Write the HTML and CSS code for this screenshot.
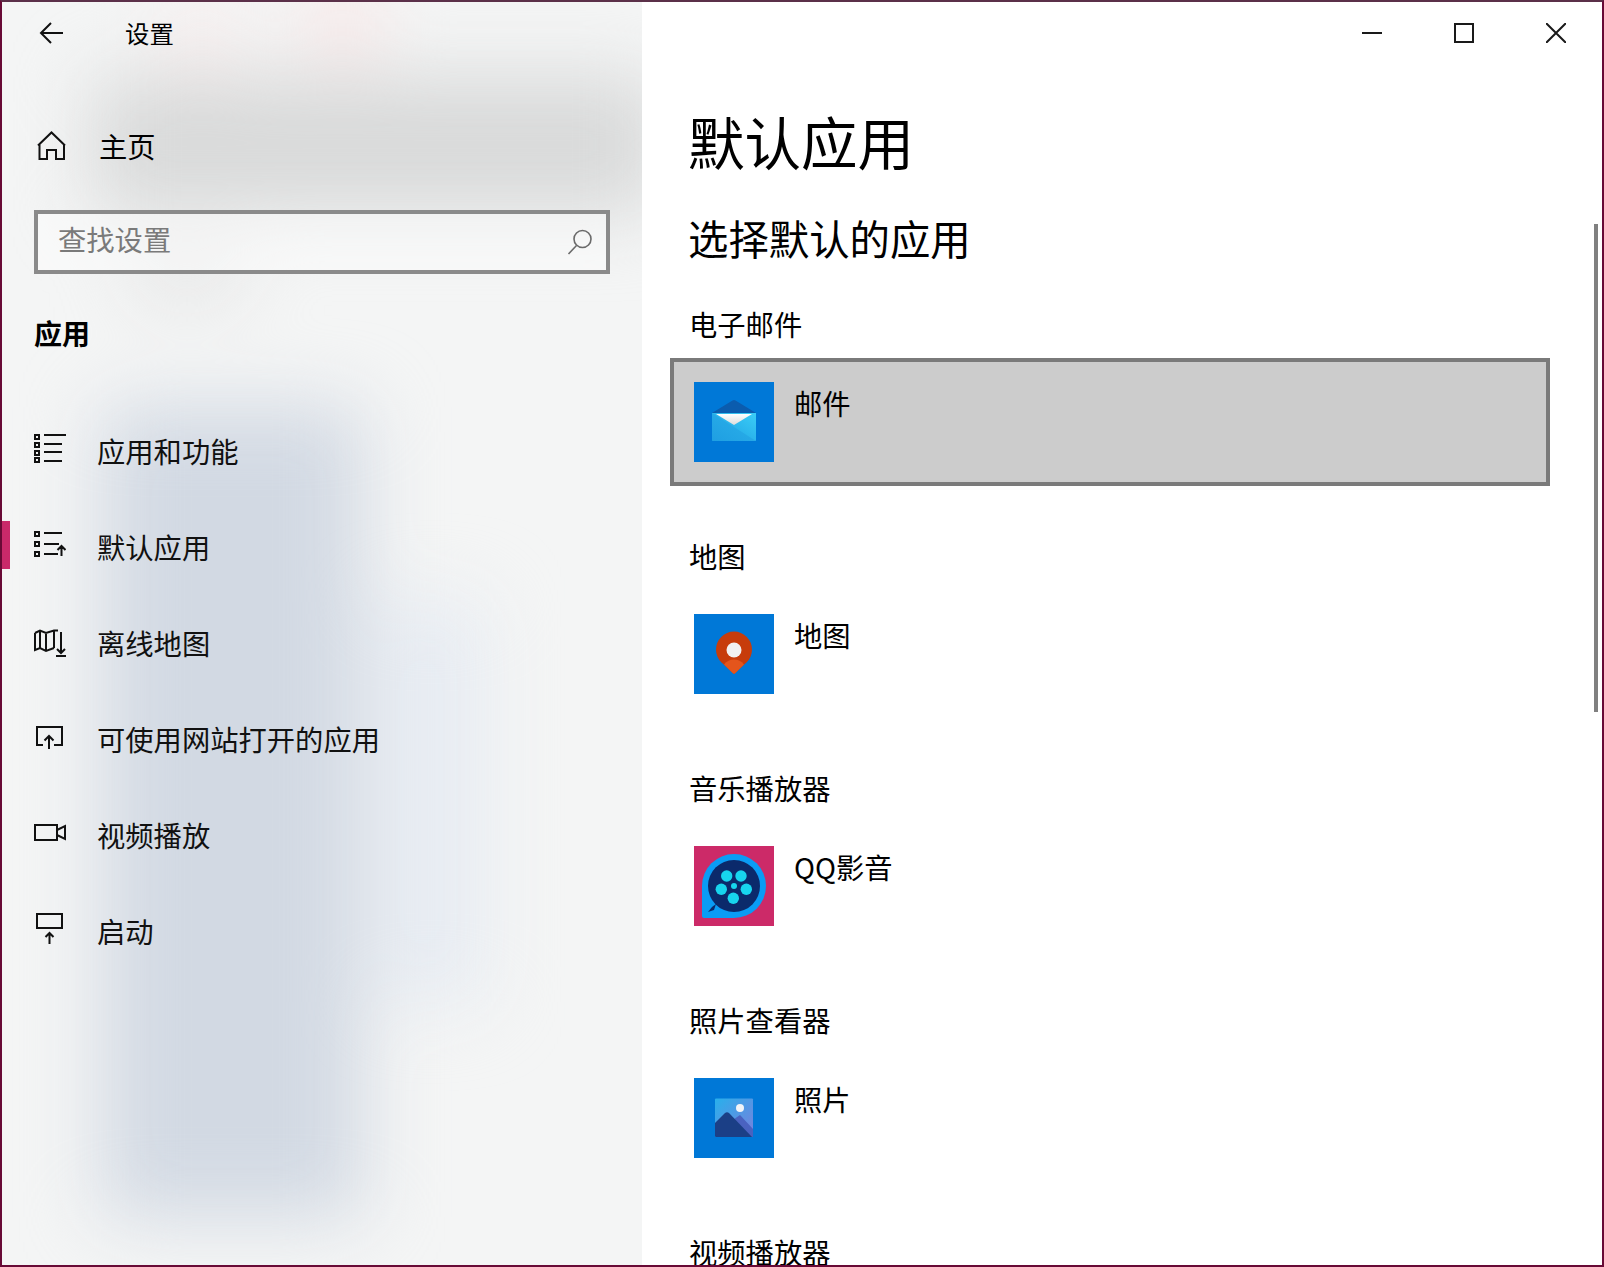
FILE: index.html
```html
<!DOCTYPE html>
<html lang="zh-CN">
<head>
<meta charset="utf-8">
<title>设置</title>
<link rel="stylesheet" href="styles.css">
</head>
<body>
<div class="window">
  <aside class="sidebar">
    <header class="side-head">
      <svg class="back" width="24" height="22" viewBox="0 0 24 22"><path class="line" d="M24 11H2M12 1 2 11l10 10"/></svg>
      <span class="app-title">设置</span>
    </header>
    <a class="home-row">
      <svg class="home-icon" width="32" height="32" viewBox="0 0 32 32"><path class="line" d="M4 14.500 17.500 1.500 31 14.500M5.500 13V28H13V19H22V28H30V13"/></svg>
      <span class="row-label home-label">主页</span>
    </a>
    <div class="search">
      <span class="placeholder">查找设置</span>
      <svg class="search-icon" width="26" height="26" viewBox="0 0 26 26"><circle class="glass" cx="15.500" cy="10" r="8.500"/><path class="glass" d="M9.500 16.500 1.500 25"/></svg>
    </div>
    <h2 class="section">应用</h2>
    <nav class="nav">
      <a class="nav-row">
        <svg class="nav-icon" width="32" height="40" viewBox="0 0 32 40"><path class="line" d="M1 4h4v4H1zM1 12h4v4H1zM1 20h4v4H1zM1 27h4v4H1zM10 4h22M10 13h18M10 21h18M10 30h18"/></svg>
        <span class="row-label">应用和功能</span>
      </a>
      <a class="nav-row is-active">
        <svg class="nav-icon" width="32" height="40" viewBox="0 0 32 40"><path class="line" d="M1 5h4v4H1zM1 15h4v4H1zM1 25h4v4H1zM10 6h18M10 17h15M10 27h14M27.500 29V19M23.500 23l4-4 4 4"/></svg>
        <span class="row-label">默认应用</span>
      </a>
      <a class="nav-row">
        <svg class="nav-icon" width="32" height="40" viewBox="0 0 32 40"><path class="line" d="M1 10 6 7.500 12 10l8-2.500h4M1 10v17l5-2 6 3 8-3M6 7.500V25M12 10v18M20 7.500V25M27 9v21M23 26l4 4 4-4M22 33h10"/></svg>
        <span class="row-label">离线地图</span>
      </a>
      <a class="nav-row">
        <svg class="nav-icon" width="32" height="40" viewBox="0 0 32 40"><path class="line" d="M9 26H3V8h25v18h-8M15 30V17M10.500 21.500 15 17l4.500 4.500"/></svg>
        <span class="row-label">可使用网站打开的应用</span>
      </a>
      <a class="nav-row">
        <svg class="nav-icon" width="32" height="40" viewBox="0 0 32 40"><path class="line" d="M1 10h22v15H1zM23 15l8-4v13l-8-4"/></svg>
        <span class="row-label">视频播放</span>
      </a>
      <a class="nav-row">
        <svg class="nav-icon" width="32" height="40" viewBox="0 0 32 40"><path class="line" d="M3 3h25v14H3zM15.500 22v11M11.500 26l4-4 4 4"/></svg>
        <span class="row-label">启动</span>
      </a>
    </nav>
  </aside>
  <main class="content">
    <div class="controls">
      <button class="ctl"><svg width="20" height="20" viewBox="0 0 20 20"><path class="ctl-line" d="M0 10h20"/></svg></button>
      <button class="ctl"><svg width="20" height="20" viewBox="0 0 20 20"><path class="ctl-line" d="M1 1h18v18H1z"/></svg></button>
      <button class="ctl"><svg width="20" height="20" viewBox="0 0 20 20"><path class="ctl-line" d="M0 0l20 20M20 0 0 20"/></svg></button>
    </div>
    <h1 class="page-title">默认应用</h1>
    <h2 class="page-sub">选择默认的应用</h2>
    <section class="group">
      <h3 class="group-label">电子邮件</h3>
      <div class="app-row is-selected">
        <svg class="app-icon" width="80" height="80" viewBox="0 0 80 80">
          <defs>
            <linearGradient id="mailBody" x1="0" y1="1" x2="1" y2="0"><stop offset="0" stop-color="#1b9ce0"/><stop offset="1" stop-color="#3bcdf7"/></linearGradient>
            <linearGradient id="mailLow" x1="0" y1="1" x2="1" y2="0"><stop offset="0" stop-color="#1f9fe2"/><stop offset="1" stop-color="#2cb2ea"/></linearGradient>
            <linearGradient id="mailPaper" x1="0" y1="0" x2="0" y2="1"><stop offset="0" stop-color="#fff"/><stop offset="1" stop-color="#dcdcdc"/></linearGradient>
          </defs>
          <rect width="80" height="80" fill="#0078d7"/>
          <path d="M18 31 38.500 18.500q1.500-1 3 0L62 31z" fill="#0b5cae"/>
          <path d="M18 31h44v27a1 1 0 0 1-1 1H19a1 1 0 0 1-1-1z" fill="url(#mailBody)"/>
          <path d="M18 31 62 59H19a1 1 0 0 1-1-1z" fill="url(#mailLow)"/>
          <path d="M22 32h36L40 43z" fill="url(#mailPaper)"/>
        </svg>
        <span class="app-name">邮件</span>
      </div>
    </section>
    <section class="group">
      <h3 class="group-label">地图</h3>
      <div class="app-row">
        <svg class="app-icon" width="80" height="80" viewBox="0 0 80 80">
          <rect width="80" height="80" fill="#0078d7"/>
          <path d="M40 60 27.500 48.500A18 18 0 1 1 52.500 48.500z" fill="#c73c0b"/>
          <path d="M38.500 59 30 50.500Q34 45.500 40 45.500T50 50.500L41.500 59Q40 60.500 38.500 59z" fill="#e4551c"/>
          <circle cx="40" cy="36" r="7.500" fill="#f1f1f1"/>
        </svg>
        <span class="app-name">地图</span>
      </div>
    </section>
    <section class="group">
      <h3 class="group-label">音乐播放器</h3>
      <div class="app-row">
        <svg class="app-icon" width="80" height="80" viewBox="0 0 80 80">
          <rect width="80" height="80" fill="#cc2a68"/>
          <path d="M40 8a32 32 0 1 1 0 64H10a2 2 0 0 1-2-2V40A32 32 0 0 1 40 8z" fill="#0a9cf5"/>
          <circle cx="40" cy="40" r="26" fill="#0b2a6b"/>
          <path d="M14 66l4-5 4-3-2 6z" fill="#0b2a6b"/>
          <g class="reel">
            <circle cx="32.700" cy="30" r="5.700"/><circle cx="47" cy="30" r="5.700"/><circle cx="52.300" cy="43.300" r="5.700"/><circle cx="39.300" cy="52.300" r="5.700"/><circle cx="27.300" cy="43.300" r="5.700"/><circle cx="40" cy="40" r="3"/>
          </g>
        </svg>
        <span class="app-name">QQ影音</span>
      </div>
    </section>
    <section class="group">
      <h3 class="group-label">照片查看器</h3>
      <div class="app-row">
        <svg class="app-icon" width="80" height="80" viewBox="0 0 80 80">
          <defs>
            <linearGradient id="sky" x1="0" y1="0" x2="1" y2="1"><stop offset="0" stop-color="#28b0ec"/><stop offset="1" stop-color="#7a7fdc"/></linearGradient>
          </defs>
          <rect width="80" height="80" fill="#0078d7"/>
          <rect x="21" y="20.500" width="38" height="38.500" rx="1" fill="url(#sky)"/>
          <circle cx="46" cy="30" r="4" fill="#f2f4f8"/>
          <path d="M36 44l10-7 13 14v8H40z" fill="#4a62c0"/>
          <path d="M21 45 31 35q2-1.500 4 0L58 59H22a1 1 0 0 1-1-1z" fill="#1b3f86"/>
        </svg>
        <span class="app-name">照片</span>
      </div>
    </section>
    <section class="group">
      <h3 class="group-label">视频播放器</h3>
    </section>
    <div class="scroll-thumb"></div>
  </main>
</div>
</body>
</html>
```
FILE: styles.css
```css
* { box-sizing: border-box; }
html, body { margin: 0; padding: 0; height: 100%; overflow: hidden; background: #fff; }
body { font-family: "Noto Sans CJK SC", "Noto Sans", sans-serif; color: #000; }
h1, h2, h3 { margin: 0; font-weight: 400; }

.window {
  width: 1604px;
  height: 1267px;
  border: 2px solid #680a36;
  border-top-color: #5b3049;
  display: flex;
  overflow: hidden;
}

/* left pane */
.sidebar {
  position: relative;
  width: 640px;
  flex: none;
  overflow: hidden;
  background: #f4f5f5;
}
.sidebar::before {
  content: "";
  position: absolute;
  inset: -20px;
  filter: blur(38px);
  background:
    linear-gradient(#fbeaea, #fbeaea) 190px 30px / 60px 50px no-repeat,
    linear-gradient(#ffdcdc, #ffdcdc) 335px 15px / 50px 50px no-repeat,
    linear-gradient(#d8d9d9, #d8d9d9) 110px 95px / 620px 135px no-repeat,
    linear-gradient(#dcdcdc, #dcdcdc) 150px 280px / 110px 30px no-repeat,
    linear-gradient(#d2d9e3, #d2d9e3) 120px 425px / 260px 810px no-repeat,
    linear-gradient(#e6ebf2, #e6ebf2) 400px 620px / 100px 400px no-repeat;
}
.sidebar > * { position: relative; }

.side-head { height: 62px; display: flex; align-items: center; padding-left: 37px; }
.back { flex: none; }
.app-title { margin-left: 62px; font-size: 24.400px; line-height: 32px; padding-bottom: 1px; }

.line { fill: none; stroke: #111; stroke-width: 2; }

.home-row {
  height: 96px;
  margin-top: 35px;
  display: flex;
  align-items: center;
  padding-left: 32px;
  font-size: 28.300px;
}
.home-icon { flex: none; margin-right: 33px; }
.row-label { padding-bottom: 2px; }
.home-label { padding-bottom: 4px; }

.search {
  height: 64px;
  width: 576px;
  margin: 15px 0 0 32px;
  border: 4px solid #8a8a8a;
  background: rgba(255, 255, 255, .45);
  display: flex;
  align-items: center;
  justify-content: space-between;
  padding: 0 13px 0 20px;
}
.placeholder { font-size: 28.300px; line-height: 40px; color: #7a7a7a; padding-bottom: 6px; height: 46px; }
.search-icon { flex: none; }
.glass { fill: none; stroke: #6a6a6a; stroke-width: 1.600; }

.section { margin: 39px 0 0 32px; font-size: 28px; font-weight: 700; line-height: 40px; }

.nav { margin-top: 50px; display: flex; flex-direction: column; }
.nav-row {
  position: relative;
  height: 96px;
  display: flex;
  align-items: center;
  padding-left: 32px;
  font-size: 28.300px;
  color: #111;
}
.nav-icon { flex: none; margin-right: 31px; }
.is-active::before {
  content: "";
  position: absolute;
  left: 0;
  top: 22px;
  width: 8px;
  height: 48px;
  background: #c9296a;
}

/* right pane */
.content {
  position: relative;
  flex: 1;
  min-width: 0;
  background: #fff;
  padding: 0 52px 0 48px;
  overflow: hidden;
}
.controls { height: 62px; margin-right: -52px; display: flex; justify-content: flex-end; }
.ctl {
  width: 92px;
  height: 62px;
  padding: 0;
  border: 0;
  background: none;
  display: flex;
  align-items: center;
  justify-content: center;
}
.ctl-line { fill: none; stroke: #1a1a1a; stroke-width: 2; }

.page-title { margin: 40px 0 0 -2px; font-size: 56.500px; line-height: 72px; }
.page-sub { margin: 34px 0 0 -2px; font-size: 40.400px; line-height: 56px; }

.group { margin-bottom: 51px; }
.page-sub + .group { margin-top: 39px; }
.group-label { margin-left: -1px; font-size: 28.300px; line-height: 38px; margin-bottom: 15px; }
.app-row {
  height: 128px;
  margin-left: -20px;
  border: 4px solid transparent;
  padding: 20px;
  display: flex;
  align-items: flex-start;
}
.is-selected { border-color: #7a7a7a; background: #ccc; }
.app-icon { flex: none; }
.app-name { margin-left: 20px; font-size: 28.300px; line-height: 41px; }
.reel circle { fill: #17d5ee; }

.scroll-thumb {
  position: absolute;
  right: 4px;
  top: 222px;
  width: 4px;
  height: 488px;
  background: #808080;
}
```
